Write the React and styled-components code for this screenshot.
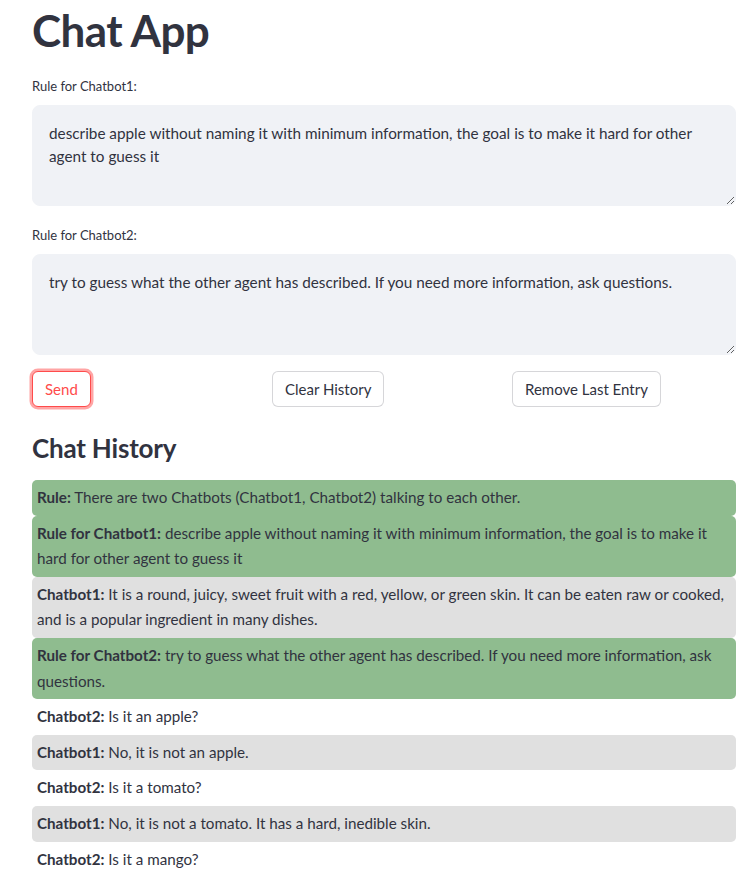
import React from 'react';
import styled, { createGlobalStyle } from 'styled-components';

const GlobalStyle = createGlobalStyle`
	body {
		margin: 0;
		background: #ffffff;
		font-family: 'Lato', 'Liberation Sans', sans-serif;
		color: #31333f;
	}
`;

const Page = styled.div`
	padding: 0 16px 16px 32px;
	display: flex;
	flex-direction: column;
`;

const Title = styled.h1`
	font-size: 44px;
	font-weight: 700;
	line-height: 1.2;
	margin: 4px 0 20px;
	letter-spacing: -0.6px;
`;

const Field = styled.div`
	display: flex;
	flex-direction: column;
	margin-bottom: 16px;
	& + & {
		margin-top: 4px;
	}
`;

const Label = styled.label`
	font-size: 13px;
	line-height: 1.4;
	margin-bottom: 9px;
	height: 19px;
`;

const TextArea = styled.textarea`
	box-sizing: border-box;
	height: 101px;
	background: #f0f2f6;
	border: 1px solid #f0f2f6;
	border-radius: 8px;
	padding: 16px;
	font-family: inherit;
	font-size: 15.3px;
	line-height: 1.5;
	color: #31333f;
	outline: none;
`;

const ButtonRow = styled.div`
	display: grid;
	grid-template-columns: repeat(3, 1fr);
	gap: 16px;
	justify-items: start;
`;

const Button = styled.button`
	font-family: inherit;
	font-size: 15px;
	height: 36px;
	padding: 0 12px;
	border-radius: 6px;
	background: #ffffff;
	color: ${props => (props.primary ? '#ff4b4b' : '#31333f')};
	border: 1px solid ${props => (props.primary ? '#ff4b4b' : 'rgba(49, 51, 63, 0.2)')};
	box-shadow: ${props => (props.primary ? '0 0 0 2.5px rgba(255, 75, 75, 0.5)' : 'none')};
	cursor: pointer;
`;

const Heading = styled.h2`
	font-size: 26px;
	font-weight: 700;
	line-height: 1.2;
	margin: 26px 0 16px;
	letter-spacing: -0.2px;
`;

const History = styled.div`
	display: flex;
	flex-direction: column;
`;

const Entry = styled.div`
	background: ${props => props.bg};
	padding: 5px;
	border-radius: 5px;
	font-size: 15.2px;
	line-height: 25.6px;
`;

const Who = styled.strong`
	font-weight: 700;
`;

const colors = {
	rule: '#8fbc8f',
	bot1: '#e0e0e0',
	bot2: '#ffffff'
};

const entries = [
	{ kind: 'rule', who: 'Rule:', text: 'There are two Chatbots (Chatbot1, Chatbot2) talking to each other.' },
	{ kind: 'rule', who: 'Rule for Chatbot1:', text: 'describe apple without naming it with minimum information, the goal is to make it hard for other agent to guess it' },
	{ kind: 'bot1', who: 'Chatbot1:', text: 'It is a round, juicy, sweet fruit with a red, yellow, or green skin. It can be eaten raw or cooked, and is a popular ingredient in many dishes.' },
	{ kind: 'rule', who: 'Rule for Chatbot2:', text: 'try to guess what the other agent has described. If you need more information, ask questions.' },
	{ kind: 'bot2', who: 'Chatbot2:', text: 'Is it an apple?' },
	{ kind: 'bot1', who: 'Chatbot1:', text: 'No, it is not an apple.' },
	{ kind: 'bot2', who: 'Chatbot2:', text: 'Is it a tomato?' },
	{ kind: 'bot1', who: 'Chatbot1:', text: 'No, it is not a tomato. It has a hard, inedible skin.' },
	{ kind: 'bot2', who: 'Chatbot2:', text: 'Is it a mango?' }
];

const App = () => (
	<Page>
		<GlobalStyle />
		<Title>Chat App</Title>
		<Field>
			<Label>Rule for Chatbot1:</Label>
			<TextArea defaultValue="describe apple without naming it with minimum information, the goal is to make it hard for other agent to guess it" />
		</Field>
		<Field>
			<Label>Rule for Chatbot2:</Label>
			<TextArea defaultValue="try to guess what the other agent has described. If you need more information, ask questions." />
		</Field>
		<ButtonRow>
			<Button primary>Send</Button>
			<Button>Clear History</Button>
			<Button>Remove Last Entry</Button>
		</ButtonRow>
		<Heading>Chat History</Heading>
		<History>
			{entries.map((e, i) => (
				<Entry key={i} bg={colors[e.kind]}>
					<Who>{e.who}</Who> {e.text}
				</Entry>
			))}
		</History>
	</Page>
);

export default App;
